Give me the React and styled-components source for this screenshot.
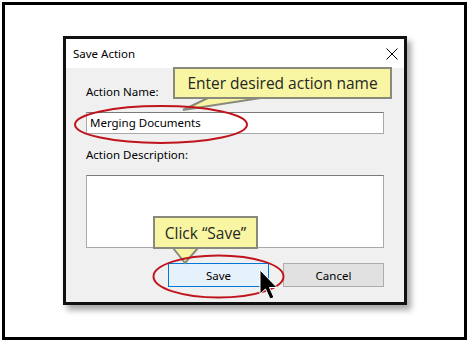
import React from 'react';
import styled, { createGlobalStyle } from 'styled-components';

const GlobalStyle = createGlobalStyle`
  html, body {
    margin: 0;
    padding: 0;
    background: #ffffff;
  }
  body {
    font-family: "Noto Sans", "DejaVu Sans", sans-serif;
  }
`;

const Page = styled.div`
  position: relative;
  width: 469px;
  height: 342px;
  padding: 2px;
  box-sizing: border-box;
`;

const Frame = styled.div`
  width: 465px;
  height: 338px;
  box-sizing: border-box;
  border: 3px solid #000;
  padding: 31px 0 0 58px;
`;

const Dialog = styled.div`
  width: 344px;
  height: 269px;
  box-sizing: border-box;
  border: 3px solid #111;
  background: #f0f0f0;
  box-shadow: 4px 5px 6px rgba(0, 0, 0, 0.35);
  display: flex;
  flex-direction: column;
`;

const TitleBar = styled.div`
  height: 29px;
  background: #fff;
  display: flex;
  align-items: center;
  justify-content: space-between;
  padding: 0 5px 0 7px;
  font-size: 11.5px;
  color: #000;
`;

const Body = styled.div`
  flex: 1;
  display: flex;
  flex-direction: column;
  padding: 16px 20px 0 20px;
`;

const Label = styled.div`
  font-size: 11.5px;
  line-height: 16px;
  height: 16px;
  color: #000;
  margin-bottom: 12px;
`;

const TextBox = styled.div`
  height: ${p => p.$h}px;
  box-sizing: border-box;
  background: #fff;
  border: 1px solid #a9a9a9;
  border-top-color: #7a7a7a;
  font-size: 11.5px;
  line-height: 20px;
  padding: 0 3px;
  color: #000;
  margin-bottom: ${p => p.$mb}px;
`;

const ButtonRow = styled.div`
  display: flex;
  justify-content: flex-end;
  gap: 14px;
`;

const Button = styled.div`
  width: 101px;
  height: 24px;
  box-sizing: border-box;
  border: 1px solid ${p => (p.$primary ? '#0078d7' : '#adadad')};
  background: ${p => (p.$primary ? '#e5f1fb' : '#e1e1e1')};
  font-size: 11.5px;
  display: flex;
  align-items: center;
  justify-content: center;
  color: #000;
`;

const Callout = styled.div`
  position: absolute;
  left: ${p => p.$x}px;
  top: ${p => p.$y}px;
  width: ${p => p.$w}px;
  height: ${p => p.$h}px;
  box-sizing: border-box;
  background: #f8f6a2;
  border: 2px solid #8a8a7c;
  font-family: "Open Sans", "Noto Sans", sans-serif;
  font-size: 15.5px;
  color: #262626;
  display: flex;
  align-items: center;
  justify-content: center;
  white-space: nowrap;
`;

const Overlay = styled.svg`
  position: absolute;
  left: 0;
  top: 0;
  pointer-events: none;
`;

const CloseIcon = () => (
  <svg width="14" height="14" viewBox="0 0 14 14">
    <path d="M1.5 1.5 L12.5 12.5 M12.5 1.5 L1.5 12.5" stroke="#000" strokeWidth="1" fill="none" />
  </svg>
);

export default function App() {
  return (
    <>
      <GlobalStyle />
      <Page>
        <Frame>
          <Dialog>
            <TitleBar>
              <span>Save Action</span>
              <CloseIcon />
            </TitleBar>
            <Body>
              <Label>Action Name:</Label>
              <TextBox $h={22} $mb={13}>Merging Documents</TextBox>
              <Label>Action Description:</Label>
              <TextBox $h={73} $mb={15} />
              <ButtonRow>
                <Button $primary>Save</Button>
                <Button>Cancel</Button>
              </ButtonRow>
            </Body>
          </Dialog>
        </Frame>

        <Overlay width="469" height="342">
          <polygon points="210,96 267,96 183,110" fill="#f8f6a2" />
          <polyline points="210,97 183,110 267,97" fill="none" stroke="#8a8a7c" strokeWidth="2" />
          <polygon points="173,247 198,247 185,263" fill="#f8f6a2" />
          <polyline points="173,248 185,263 198,248" fill="none" stroke="#8a8a7c" strokeWidth="2" />
        </Overlay>

        <Callout $x={173} $y={67} $w={219} $h={32}>Enter desired action name</Callout>
        <Callout $x={153} $y={216} $w={105} $h={33}>Click “Save”</Callout>

        <Overlay width="469" height="342">
          <ellipse cx="161" cy="124.5" rx="86" ry="18.5" fill="none" stroke="#c0141c" strokeWidth="2" />
          <ellipse cx="218.5" cy="276.5" rx="65" ry="21" fill="none" stroke="#c0141c" strokeWidth="2" />
          <path
            d="M260 270 L260 294 L265.5 289 L270 299 L274 297.5 L269.5 287.5 L277 287.5 Z"
            fill="#000"
            stroke="#fff"
            strokeWidth="1"
            strokeLinejoin="round"
          />
        </Overlay>
      </Page>
    </>
  );
}
